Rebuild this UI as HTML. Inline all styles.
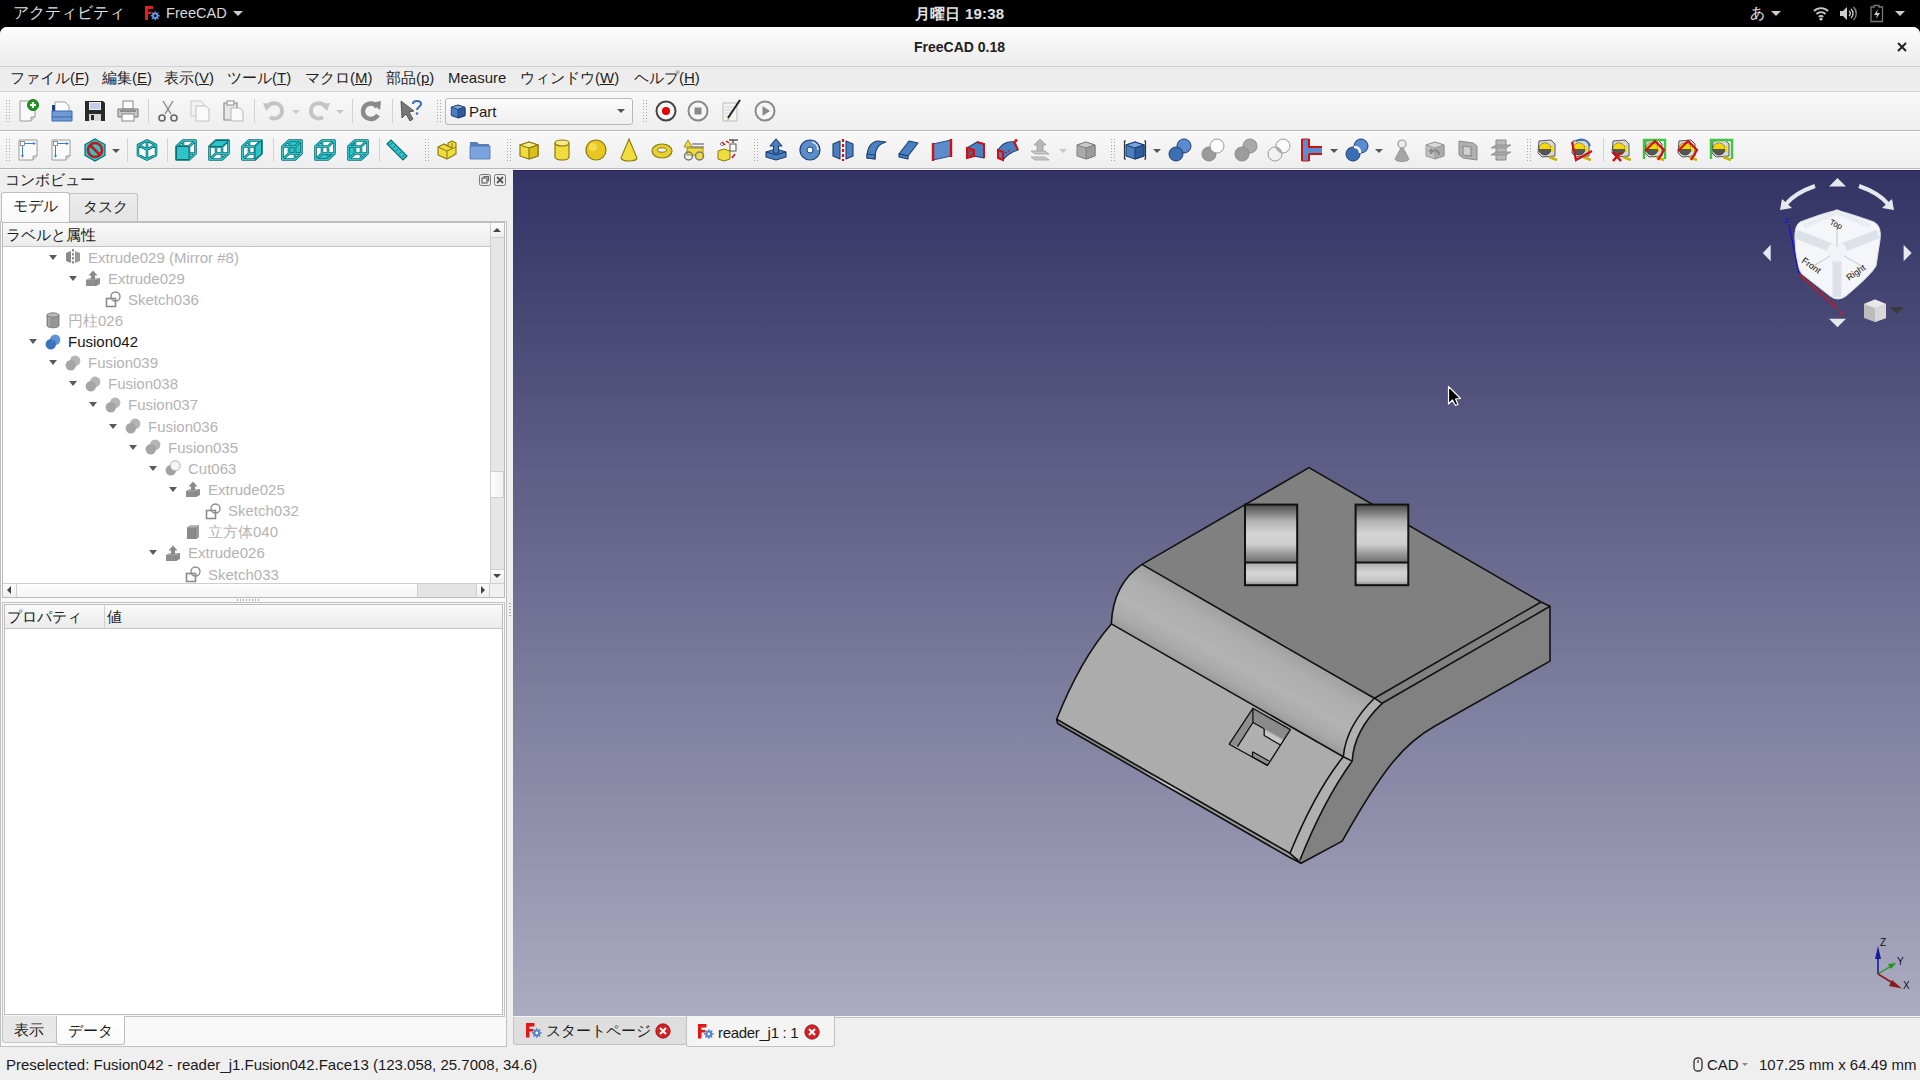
<!DOCTYPE html>
<html lang="ja">
<head>
<meta charset="utf-8">
<style>
*{margin:0;padding:0;box-sizing:border-box}
html,body{width:1920px;height:1080px;overflow:hidden;background:#000}
body{font-family:"Liberation Sans",sans-serif;position:relative;color:#1c1c1c}
.a{position:absolute}
.t{position:absolute;white-space:nowrap;line-height:1}
svg{position:absolute;overflow:visible}
#topbar{left:0;top:0;width:1920px;height:27px;background:#000;color:#e2e2e2;font-size:15px}
#win{left:0;top:27px;width:1920px;height:1053px;background:#efefef;border-radius:7px 7px 0 0;overflow:hidden}
#title{left:0;top:0;width:1920px;height:40px;background:linear-gradient(#fdfdfd,#ececec);border-bottom:1px solid #cfcfcf}
#menu{left:0;top:40px;width:1920px;height:25px;background:#ededed;border-bottom:1px solid #d4d4d4;font-size:15px;color:#1e1e1e}
.tb{left:0;width:1920px;height:39px;background:linear-gradient(#f8f8f8,#eeeeee);border-bottom:1px solid #b8b8b8}
.hd{position:absolute;width:5px;height:24px;background-image:radial-gradient(circle,#a8a8a8 0.55px,transparent 0.9px);background-size:3px 3px}
.sp{position:absolute;width:1px;height:24px;background:#d3d3d3}
.dd{position:absolute;width:0;height:0;border-left:4px solid transparent;border-right:4px solid transparent;border-top:4px solid #555}
#view{left:513px;top:143px;width:1407px;height:846px;background:linear-gradient(#333365,#ababc1);border-top:1px solid #26265a;overflow:hidden}
#status{left:0;top:1021px;width:1920px;height:32px;background:#efefef;font-size:15px}
.tree .t{font-size:15px;color:#b3b3b3}
.arr{position:absolute;width:0;height:0;border-left:4px solid transparent;border-right:4px solid transparent;border-top:5px solid #5a5a5a}
</style>
</head>
<body>

<div id="topbar" class="a">
<div class="t" style="left:13px;top:5px;font-size:15.5px">アクティビティ</div>
<svg style="left:144px;top:5px" width="16" height="16" viewBox="0 0 16 16"><path d="M1 1 H9 V4 H4 V6.5 H7.5 V9 H4 V15 H1Z" fill="#e81c1c"/><path d="M14.42,10.09 L15.76,10.17 L15.76,11.43 L14.42,11.51 L13.98,12.58 L14.87,13.58 L13.98,14.47 L12.98,13.58 L11.91,14.02 L11.83,15.36 L10.57,15.36 L10.49,14.02 L9.42,13.58 L8.42,14.47 L7.53,13.58 L8.42,12.58 L7.98,11.51 L6.64,11.43 L6.64,10.17 L7.98,10.09 L8.42,9.02 L7.53,8.02 L8.42,7.13 L9.42,8.02 L10.49,7.58 L10.57,6.24 L11.83,6.24 L11.91,7.58 L12.98,8.02 L13.98,7.13 L14.87,8.02 L13.98,9.02Z" fill="#5a9ae6"/><circle cx="11.2" cy="10.8" r="1.3" fill="#000"/></svg>
<div class="t" style="left:166px;top:6px;font-size:14.6px;color:#dadada">FreeCAD</div>
<div class="dd" style="left:233px;top:11px;border-top-color:#ccc;border-left-width:5px;border-right-width:5px;border-top-width:5px"></div>
<div class="t" style="left:915px;top:6px;font-size:15px;font-weight:bold;letter-spacing:0.2px">月曜日 19:38</div>
<div class="t" style="left:1750px;top:5px;font-size:15px">あ</div>
<div class="dd" style="left:1771px;top:11px;border-top-color:#ccc;border-left-width:5px;border-right-width:5px;border-top-width:5px"></div>
<svg style="left:1813px;top:6px" width="16" height="15" viewBox="0 0 16 15"><path d="M1 5 A10 10 0 0 1 15 5" fill="none" stroke="#ccc" stroke-width="1.8"/><path d="M3.5 8 A6.5 6.5 0 0 1 12.5 8" fill="none" stroke="#ccc" stroke-width="1.8"/><path d="M5.8 10.8 A3 3 0 0 1 10.2 10.8" fill="none" stroke="#ccc" stroke-width="1.8"/><circle cx="8" cy="13" r="1.6" fill="#ccc"/></svg>
<svg style="left:1840px;top:6px" width="17" height="15" viewBox="0 0 17 15"><path d="M0 5 H3 L7 1 V14 L3 10 H0Z" fill="#ccc"/><path d="M9 5 A3 3 0 0 1 9 10" fill="none" stroke="#ccc" stroke-width="1.4"/><path d="M11 3 A6 6 0 0 1 11 12" fill="none" stroke="#ccc" stroke-width="1.4"/><path d="M13.5 1 A9 9 0 0 1 13.5 14" fill="none" stroke="#888" stroke-width="1.4"/></svg>
<svg style="left:1870px;top:5px" width="14" height="17" viewBox="0 0 14 17"><path d="M4 0.5 H9 V2 H12.5 V16.5 H1 V2 H4Z" fill="none" stroke="#777" stroke-width="1.3"/><path d="M8 4 L4 10 H7 L6 14 L10 8 H7Z" fill="#ccc"/></svg>
<div class="dd" style="left:1895px;top:11px;border-top-color:#ccc;border-left-width:5px;border-right-width:5px;border-top-width:5px"></div>
</div>
<div id="win" class="a"></div>
<div id="title" class="a" style="top:27px;border-radius:7px 7px 0 0"></div>
<div class="t" style="left:914px;top:40px;font-weight:bold;font-size:14px;color:#202020">FreeCAD 0.18</div>
<svg style="left:1897px;top:42px" width="10" height="10" viewBox="0 0 10 10"><path d="M1 1 L9 9 M9 1 L1 9" stroke="#222" stroke-width="2"/></svg>
<div id="menu" class="a" style="top:67px">
<div class="t" style="left:10px;top:3px">ファイル(<u>F</u>)</div>
<div class="t" style="left:102px;top:3px">編集(<u>E</u>)</div>
<div class="t" style="left:164px;top:3px">表示(<u>V</u>)</div>
<div class="t" style="left:227px;top:3px">ツール(<u>T</u>)</div>
<div class="t" style="left:305px;top:3px">マクロ(<u>M</u>)</div>
<div class="t" style="left:386px;top:3px">部品(<u>p</u>)</div>
<div class="t" style="left:448px;top:3px">Measure</div>
<div class="t" style="left:520px;top:3px">ウィンドウ(<u>W</u>)</div>
<div class="t" style="left:634px;top:3px">ヘルプ(<u>H</u>)</div>
</div>
<div class="a tb" style="top:92px"></div>
<div class="a tb" style="top:131px;height:38px;border-top:1px solid #fdfdfd"></div>
<div class="a" style="left:0;top:169px;width:1920px;height:1px;background:#f8f8f8"></div>
<div class="hd" style="left:5px;top:99px"></div>
<svg style="left:16.0px;top:99.0px" width="24" height="24" viewBox="0 0 24 24"><path d="M4 2 H15 L19 6 V18 L15 22 H4Z" fill="#fafafa" stroke="#9a9a9a" stroke-width="1"/><path d="M15 22 V18 H19" fill="#ddd" stroke="#9a9a9a" stroke-width="1"/><circle cx="17" cy="6" r="5.5" fill="#1a9a1a" stroke="#0b5d0b" stroke-width="0.8"/><path d="M17 3 V9 M14 6 H20" stroke="#fff" stroke-width="2.2"/></svg>
<svg style="left:50.0px;top:99.0px" width="24" height="24" viewBox="0 0 24 24"><path d="M5 3 H15 L19 7 V14 H5Z" fill="#fff" stroke="#888" stroke-width="0.8"/><path d="M2 6 H5 V13 H22 V22 H2Z" fill="#1f3f80"/><path d="M2 12 H22 V22 H2Z" fill="#6f9ad6" stroke="#3b68a8" stroke-width="1"/><path d="M2 18 H22" stroke="#3b68a8" stroke-width="1"/></svg>
<svg style="left:83.0px;top:99.0px" width="24" height="24" viewBox="0 0 24 24"><path d="M2 2 H20 L22 4 V22 H2Z" fill="#2a2a2a"/><rect x="6" y="3" width="12" height="8" fill="#e8eef8"/><path d="M7 5 H17 M7 7 H17 M7 9 H17" stroke="#8aa0c8" stroke-width="0.8"/><rect x="6" y="15" width="12" height="7" fill="#d8d8d8"/><rect x="8" y="16" width="3" height="5" fill="#2a2a2a"/></svg>
<svg style="left:116.0px;top:99.0px" width="24" height="24" viewBox="0 0 24 24"><rect x="7" y="2" width="10" height="8" fill="#fff" stroke="#888" stroke-width="1"/><path d="M2 10 H22 V18 H2Z" fill="#c8c8c8" stroke="#777" stroke-width="1"/><rect x="6" y="15" width="12" height="7" fill="#fff" stroke="#888" stroke-width="1"/><path d="M4 12 H20" stroke="#555" stroke-width="1"/></svg>
<svg style="left:156.0px;top:99.0px" width="24" height="24" viewBox="0 0 24 24"><path d="M7 2 L15 15 M17 2 L9 15" stroke="#888" stroke-width="1.4" fill="none"/><circle cx="6" cy="19" r="3" fill="none" stroke="#666" stroke-width="1.6"/><circle cx="18" cy="19" r="3" fill="none" stroke="#666" stroke-width="1.6"/></svg>
<svg style="left:188.0px;top:99.0px" width="24" height="24" viewBox="0 0 24 24"><path d="M3 2 H13 L16 5 V17 H3Z" fill="#f2f2f2" stroke="#c8c8c8" stroke-width="1"/><path d="M8 7 H18 L21 10 V22 H8Z" fill="#fafafa" stroke="#c0c0c0" stroke-width="1"/></svg>
<svg style="left:221.0px;top:99.0px" width="24" height="24" viewBox="0 0 24 24"><path d="M3 4 H16 V21 H3Z" fill="#e8e8e8" stroke="#8a8a8a" stroke-width="1.2"/><rect x="6" y="2" width="7" height="4" fill="#fff" stroke="#8a8a8a" stroke-width="1"/><path d="M10 9 H19 L22 12 V22 H10Z" fill="#fafafa" stroke="#b8b8b8" stroke-width="1"/></svg>
<svg style="left:262.0px;top:99.0px" width="24" height="24" viewBox="0 0 24 24"><path d="M5 8 C9 2 20 3 20 12 C20 19 12 21 8 18" fill="none" stroke="#c4c4c4" stroke-width="4"/><path d="M1 4 L11 5 L4 12Z" fill="#c4c4c4"/></svg>
<svg style="left:307.0px;top:99.0px" width="24" height="24" viewBox="0 0 24 24"><path d="M19 8 C15 2 4 3 4 12 C4 19 12 21 16 18" fill="none" stroke="#c4c4c4" stroke-width="4"/><path d="M23 4 L13 5 L20 12Z" fill="#c4c4c4"/></svg>
<svg style="left:359.0px;top:99.0px" width="24" height="24" viewBox="0 0 24 24"><path d="M18 8 C15 3 5 3 4 12 C4 20 14 23 19 16" fill="none" stroke="#8a8a8a" stroke-width="4.5"/><path d="M12 4 L22 2 L21 11Z" fill="#8a8a8a"/></svg>
<svg style="left:399.0px;top:99.0px" width="24" height="24" viewBox="0 0 24 24"><path d="M2 2 L15 12 L10 13 L14 20 L11 22 L7 15 L3 19Z" fill="#777" stroke="#444" stroke-width="0.8"/><path d="M14 5 C14 1 22 1 22 5 C22 8 18 8 18 11" fill="none" stroke="#3d6fb5" stroke-width="2"/><circle cx="18" cy="14.5" r="1.3" fill="#3d6fb5"/></svg>
<svg style="left:654.0px;top:99.0px" width="24" height="24" viewBox="0 0 24 24"><circle cx="12" cy="12" r="9.5" fill="#f6f6f6" stroke="#444" stroke-width="2"/><circle cx="12" cy="12" r="4" fill="#e00000"/></svg>
<svg style="left:686.0px;top:99.0px" width="24" height="24" viewBox="0 0 24 24"><circle cx="12" cy="12" r="9.5" fill="#f6f6f6" stroke="#8a8a8a" stroke-width="2"/><rect x="8.5" y="8.5" width="7" height="7" fill="#8a8a8a"/></svg>
<svg style="left:719.0px;top:99.0px" width="24" height="24" viewBox="0 0 24 24"><path d="M4 4 H18 V22 H4Z" fill="#f4f4f4" stroke="#bbb" stroke-width="1"/><path d="M6 8 H15 M6 11 H15 M6 14 H13 M6 17 H12" stroke="#ccc" stroke-width="0.8"/><path d="M21 1 L9 19" stroke="#222" stroke-width="2"/><path d="M9 19 L8 22 L10.5 20Z" fill="#c9a050"/></svg>
<svg style="left:753.0px;top:99.0px" width="24" height="24" viewBox="0 0 24 24"><circle cx="12" cy="12" r="9.5" fill="#f6f6f6" stroke="#8a8a8a" stroke-width="2"/><path d="M9.5 7 L17 12 L9.5 17Z" fill="#8a8a8a"/></svg>
<div class="sp" style="left:148px;top:99px"></div>
<div class="sp" style="left:254px;top:99px"></div>
<div class="sp" style="left:352px;top:99px"></div>
<div class="sp" style="left:392px;top:99px"></div>
<div class="dd" style="left:292px;top:110px;border-top-color:#c8c8c8"></div>
<div class="dd" style="left:336px;top:110px;border-top-color:#c8c8c8"></div>
<div class="hd" style="left:436px;top:99px"></div>
<div class="hd" style="left:642px;top:99px"></div>
<div class="a" style="left:445px;top:98px;width:188px;height:27px;border:1px solid #b8b8b8;border-radius:3px;background:linear-gradient(#fbfbfb,#efefef)"></div>
<svg style="left:450px;top:103px" width="17" height="17" viewBox="0 0 24 24"><path d="M3 7 L12 4 L21 7 L21 18 L12 21 L3 18Z" fill="#4a7fc1" stroke="#1f3f70" stroke-width="1.1" stroke-linejoin="round"/><path d="M3 7 L12 4 L21 7 L12 10Z" fill="#7aa6e0" stroke="#1f3f70" stroke-width="1.1" stroke-linejoin="round"/><path d="M12 10 L21 7 L21 18 L12 21Z" fill="#2e5c9c" stroke="#1f3f70" stroke-width="1.1" stroke-linejoin="round"/></svg>
<svg style="left:449px;top:102px" width="18" height="18" viewBox="0 0 24 24"><path d="M3 7 L12 4 L21 7 L21 18 L12 21 L3 18Z" fill="#4a7fc1" stroke="#1f3f70" stroke-width="1.1" stroke-linejoin="round"/><path d="M3 7 L12 4 L21 7 L12 10Z" fill="#7aa6e0" stroke="#1f3f70" stroke-width="1.1" stroke-linejoin="round"/><path d="M12 10 L21 7 L21 18 L12 21Z" fill="#2e5c9c" stroke="#1f3f70" stroke-width="1.1" stroke-linejoin="round"/></svg>
<div class="t" style="left:469px;top:104px;font-size:15px;color:#1a1a1a">Part</div>
<div class="dd" style="left:617px;top:109px;border-top-color:#555;border-left-width:4px;border-right-width:4px;border-top-width:4px"></div>
<div class="hd" style="left:5px;top:138px"></div>
<svg style="left:16.0px;top:138.0px" width="24" height="24" viewBox="0 0 24 24"><path d="M3 2 H21 V18 L17 22 H3Z" fill="#fafafa" stroke="#9a9a9a" stroke-width="1"/><path d="M17 22 V18 H21" fill="#ddd" stroke="#9a9a9a" stroke-width="1"/><rect x="4.5" y="3.5" width="4" height="4" fill="#fff" stroke="#888" stroke-width="0.9"/><path d="M6.5 8 V19 M9 5.5 H19" stroke="#3a7de0" stroke-width="1"/><path d="M5 17 L6.5 20 L8 17Z M17 4 L20 5.5 L17 7Z" fill="#3a7de0"/></svg>
<svg style="left:49.0px;top:138.0px" width="24" height="24" viewBox="0 0 24 24"><path d="M3 2 H21 V18 L17 22 H3Z" fill="#fafafa" stroke="#9a9a9a" stroke-width="1"/><path d="M17 22 V18 H21" fill="#ddd" stroke="#9a9a9a" stroke-width="1"/><rect x="4.5" y="3.5" width="4" height="4" fill="#fff" stroke="#888" stroke-width="0.9"/><path d="M6.5 8 V19 M9 5.5 H19" stroke="#3a7de0" stroke-width="1"/><path d="M5 17 L6.5 20 L8 17Z M17 4 L20 5.5 L17 7Z" fill="#3a7de0"/></svg>
<svg style="left:83.0px;top:138.0px" width="24" height="24" viewBox="0 0 24 24"><path d="M12 1 L22 6.5 V17.5 L12 23 L2 17.5 V6.5Z" fill="#2ec4c8" stroke="#0b6d72" stroke-width="1.2"/><circle cx="12" cy="12" r="7" fill="none" stroke="#c81414" stroke-width="2.6"/><path d="M7 7 L17 17" stroke="#c81414" stroke-width="2.6"/></svg>
<svg style="left:135.0px;top:138.0px" width="24" height="24" viewBox="0 0 24 24"><path d="M12,2.5 L21,7 V17 L12,21.5 L3,17 V7Z" fill="#fff"/><path d="M12,2.5 L21,7 V17 L12,21.5 L3,17 V7Z M12,2.5 V21.5 M3,7 L12,11.5 L21,7" fill="none" stroke="#0b6d72" stroke-width="2.6" stroke-linejoin="round"/><path d="M12,2.5 L21,7 V17 L12,21.5 L3,17 V7Z M12,2.5 V21.5 M3,7 L12,11.5 L21,7" fill="none" stroke="#2ec4c8" stroke-width="1.1" stroke-linejoin="round"/></svg>
<svg style="left:174.0px;top:138.0px" width="24" height="24" viewBox="0 0 24 24"><path d="M2.5,8.5 L9,2.5 L21.5,2.5 L21.5,15.5 L15,21.5 L2.5,21.5Z" fill="#fff"/><path d="M2.5,8.5 H15 V21.5 H2.5Z M9,2.5 H21.5 V15.5 H9Z M2.5,8.5 L9,2.5 M15,8.5 L21.5,2.5 M15,21.5 L21.5,15.5 M2.5,21.5 L9,15.5" fill="none" stroke="#0b6d72" stroke-width="2.6" stroke-linejoin="round"/><path d="M2.5,8.5 H15 V21.5 H2.5Z M9,2.5 H21.5 V15.5 H9Z M2.5,8.5 L9,2.5 M15,8.5 L21.5,2.5 M15,21.5 L21.5,15.5 M2.5,21.5 L9,15.5" fill="none" stroke="#2ec4c8" stroke-width="1.1" stroke-linejoin="round"/><path d="M2.5,8.5 L15,8.5 L15,21.5 L2.5,21.5Z" fill="#2ec4c8" stroke="#0b6d72" stroke-width="1"/></svg>
<svg style="left:207.0px;top:138.0px" width="24" height="24" viewBox="0 0 24 24"><path d="M2.5,8.5 L9,2.5 L21.5,2.5 L21.5,15.5 L15,21.5 L2.5,21.5Z" fill="#fff"/><path d="M2.5,8.5 H15 V21.5 H2.5Z M9,2.5 H21.5 V15.5 H9Z M2.5,8.5 L9,2.5 M15,8.5 L21.5,2.5 M15,21.5 L21.5,15.5 M2.5,21.5 L9,15.5" fill="none" stroke="#0b6d72" stroke-width="2.6" stroke-linejoin="round"/><path d="M2.5,8.5 H15 V21.5 H2.5Z M9,2.5 H21.5 V15.5 H9Z M2.5,8.5 L9,2.5 M15,8.5 L21.5,2.5 M15,21.5 L21.5,15.5 M2.5,21.5 L9,15.5" fill="none" stroke="#2ec4c8" stroke-width="1.1" stroke-linejoin="round"/><path d="M2.5,8.5 L9,2.5 L21.5,2.5 L15,8.5Z" fill="#2ec4c8" stroke="#0b6d72" stroke-width="1"/></svg>
<svg style="left:240.0px;top:138.0px" width="24" height="24" viewBox="0 0 24 24"><path d="M2.5,8.5 L9,2.5 L21.5,2.5 L21.5,15.5 L15,21.5 L2.5,21.5Z" fill="#fff"/><path d="M2.5,8.5 H15 V21.5 H2.5Z M9,2.5 H21.5 V15.5 H9Z M2.5,8.5 L9,2.5 M15,8.5 L21.5,2.5 M15,21.5 L21.5,15.5 M2.5,21.5 L9,15.5" fill="none" stroke="#0b6d72" stroke-width="2.6" stroke-linejoin="round"/><path d="M2.5,8.5 H15 V21.5 H2.5Z M9,2.5 H21.5 V15.5 H9Z M2.5,8.5 L9,2.5 M15,8.5 L21.5,2.5 M15,21.5 L21.5,15.5 M2.5,21.5 L9,15.5" fill="none" stroke="#2ec4c8" stroke-width="1.1" stroke-linejoin="round"/><path d="M15,8.5 L21.5,2.5 L21.5,15.5 L15,21.5Z" fill="#2ec4c8" stroke="#0b6d72" stroke-width="1"/></svg>
<svg style="left:280.0px;top:138.0px" width="24" height="24" viewBox="0 0 24 24"><path d="M2.5,8.5 L9,2.5 L21.5,2.5 L21.5,15.5 L15,21.5 L2.5,21.5Z" fill="#fff"/><path d="M9,2.5 L21.5,2.5 L21.5,15.5 L9,15.5Z" fill="#2ec4c8"/><path d="M2.5,8.5 H15 V21.5 H2.5Z M9,2.5 H21.5 V15.5 H9Z M2.5,8.5 L9,2.5 M15,8.5 L21.5,2.5 M15,21.5 L21.5,15.5 M2.5,21.5 L9,15.5" fill="none" stroke="#0b6d72" stroke-width="2.6" stroke-linejoin="round"/><path d="M2.5,8.5 H15 V21.5 H2.5Z M9,2.5 H21.5 V15.5 H9Z M2.5,8.5 L9,2.5 M15,8.5 L21.5,2.5 M15,21.5 L21.5,15.5 M2.5,21.5 L9,15.5" fill="none" stroke="#2ec4c8" stroke-width="1.1" stroke-linejoin="round"/></svg>
<svg style="left:313.0px;top:138.0px" width="24" height="24" viewBox="0 0 24 24"><path d="M2.5,8.5 L9,2.5 L21.5,2.5 L21.5,15.5 L15,21.5 L2.5,21.5Z" fill="#fff"/><path d="M2.5,21.5 L15,21.5 L21.5,15.5 L9,15.5Z" fill="#2ec4c8"/><path d="M2.5,8.5 H15 V21.5 H2.5Z M9,2.5 H21.5 V15.5 H9Z M2.5,8.5 L9,2.5 M15,8.5 L21.5,2.5 M15,21.5 L21.5,15.5 M2.5,21.5 L9,15.5" fill="none" stroke="#0b6d72" stroke-width="2.6" stroke-linejoin="round"/><path d="M2.5,8.5 H15 V21.5 H2.5Z M9,2.5 H21.5 V15.5 H9Z M2.5,8.5 L9,2.5 M15,8.5 L21.5,2.5 M15,21.5 L21.5,15.5 M2.5,21.5 L9,15.5" fill="none" stroke="#2ec4c8" stroke-width="1.1" stroke-linejoin="round"/></svg>
<svg style="left:346.0px;top:138.0px" width="24" height="24" viewBox="0 0 24 24"><path d="M2.5,8.5 L9,2.5 L21.5,2.5 L21.5,15.5 L15,21.5 L2.5,21.5Z" fill="#fff"/><path d="M2.5,8.5 L9,2.5 L9,15.5 L2.5,21.5Z" fill="#2ec4c8"/><path d="M2.5,8.5 H15 V21.5 H2.5Z M9,2.5 H21.5 V15.5 H9Z M2.5,8.5 L9,2.5 M15,8.5 L21.5,2.5 M15,21.5 L21.5,15.5 M2.5,21.5 L9,15.5" fill="none" stroke="#0b6d72" stroke-width="2.6" stroke-linejoin="round"/><path d="M2.5,8.5 H15 V21.5 H2.5Z M9,2.5 H21.5 V15.5 H9Z M2.5,8.5 L9,2.5 M15,8.5 L21.5,2.5 M15,21.5 L21.5,15.5 M2.5,21.5 L9,15.5" fill="none" stroke="#2ec4c8" stroke-width="1.1" stroke-linejoin="round"/></svg>
<svg style="left:385.0px;top:138.0px" width="24" height="24" viewBox="0 0 24 24"><path d="M2 6 L6 2 L22 18 L18 22Z" fill="#2ec4c8" stroke="#0b6d72" stroke-width="1.2"/><path d="M5 7 L7 5 M8 10 L10 8 M11 13 L13 11 M14 16 L16 14 M17 19 L19 17" stroke="#0b6d72" stroke-width="0.9"/></svg>
<svg style="left:435.0px;top:138.0px" width="24" height="24" viewBox="0 0 24 24"><path d="M3 9 L9 6 L13 8 V5 L17 3 L21 5 V16 L12 21 L3 17Z" fill="#f0dc3c" stroke="#8a7a10" stroke-width="1.1" stroke-linejoin="round"/><path d="M3 9 L12 13 L21 9 M12 13 V21 M9 6 L17 10 M13 8 L17 10 V5" fill="none" stroke="#8a7a10" stroke-width="1"/></svg>
<svg style="left:468.0px;top:138.0px" width="24" height="24" viewBox="0 0 24 24"><path d="M2 4 H9 L11 6 H21 V20 H2Z" fill="#5a7fb8"/><path d="M2 8 H22 V21 H2Z" fill="#7aa2dc" stroke="#4c72ad" stroke-width="0.8"/></svg>
<svg style="left:517.0px;top:138.0px" width="24" height="24" viewBox="0 0 24 24"><path d="M3 7 L12 4 L21 7 L21 18 L12 21 L3 18Z" fill="#f0dc3c" stroke="#8a7a10" stroke-width="1.2" stroke-linejoin="round"/><path d="M3 7 L12 4 L21 7 L12 10Z" fill="#f8ec80" stroke="#8a7a10" stroke-width="1.2" stroke-linejoin="round"/><path d="M12 10 L21 7 L21 18 L12 21Z" fill="#d8c020" stroke="#8a7a10" stroke-width="1.2" stroke-linejoin="round"/></svg>
<svg style="left:550.0px;top:138.0px" width="24" height="24" viewBox="0 0 24 24"><path d="M5 5 V19 A7 3 0 0 0 19 19 V5" fill="#f0dc3c" stroke="#8a7a10" stroke-width="1.2"/><ellipse cx="12" cy="5" rx="7" ry="3" fill="#f8ec80" stroke="#8a7a10" stroke-width="1.2"/></svg>
<svg style="left:584.0px;top:138.0px" width="24" height="24" viewBox="0 0 24 24"><circle cx="12" cy="12" r="10" fill="#e8c820" stroke="#8a7a10" stroke-width="1.2"/><circle cx="9" cy="9" r="4" fill="#f6e26a" opacity="0.7"/></svg>
<svg style="left:617.0px;top:138.0px" width="24" height="24" viewBox="0 0 24 24"><path d="M12 1 L20 20 A8 3 0 0 1 4 20Z" fill="#f0dc3c" stroke="#8a7a10" stroke-width="1.1"/></svg>
<svg style="left:650.0px;top:138.0px" width="24" height="24" viewBox="0 0 24 24"><ellipse cx="12" cy="13" rx="10" ry="7" fill="#e8d030" stroke="#8a7a10" stroke-width="1.2"/><ellipse cx="12" cy="12" rx="4.5" ry="2.2" fill="#f4f4f4" stroke="#8a7a10" stroke-width="1"/></svg>
<svg style="left:682.0px;top:138.0px" width="24" height="24" viewBox="0 0 24 24"><path d="M6 2 L10 9 H2Z" fill="#f0dc3c" stroke="#8a7a10" stroke-width="0.8"/><path d="M10 6 H22 M10 9 H22" stroke="#888" stroke-width="1.5"/><rect x="5" y="10" width="16" height="7" fill="#f0dc3c" stroke="#8a7a10" stroke-width="0.8"/><circle cx="6.5" cy="18" r="4" fill="none" stroke="#777" stroke-width="1.5"/><circle cx="17.5" cy="18" r="4" fill="#f0dc3c" stroke="#777" stroke-width="1.5"/></svg>
<svg style="left:716.0px;top:138.0px" width="24" height="24" viewBox="0 0 24 24"><path d="M2 13 L8 11 L14 13 V21 L8 23 L2 21Z" fill="#f0dc3c" stroke="#8a7a10" stroke-width="1"/><rect x="14" y="6" width="6" height="7" fill="#fff" stroke="#555" stroke-width="1"/><path d="M13 2 H22 M17 2 V5" stroke="#555" stroke-width="1.5"/><path d="M6 4 L9 7 M10 3 L13 5 M19 16 L16 20" stroke="#d01010" stroke-width="1.5"/><path d="M4 6 L6 4 L8 6 L6 8Z" fill="none" stroke="#555" stroke-width="0.8"/></svg>
<svg style="left:764.0px;top:138.0px" width="24" height="24" viewBox="0 0 24 24"><path d="M2 14 L12 11 L22 14 V19 L12 22 L2 19Z" fill="#4a7fc1" stroke="#1f3f70" stroke-width="1.1" stroke-linejoin="round"/><path d="M2 14 L12 17 L22 14" fill="#4a7fc1" stroke="#1f3f70" stroke-width="1.1" stroke-linejoin="round"/><path d="M12 1 L18 8 H14.5 V15 H9.5 V8 H6Z" fill="#4a7fc1" stroke="#1f3f70" stroke-width="1.1" stroke-linejoin="round"/></svg>
<svg style="left:798.0px;top:138.0px" width="24" height="24" viewBox="0 0 24 24"><circle cx="12" cy="12" r="10" fill="#5b8ccc" stroke="#1f3f70" stroke-width="1.2"/><circle cx="12" cy="12" r="3" fill="#fff" stroke="#1f3f70" stroke-width="1"/><path d="M14 4 A8 8 0 0 1 20 12" fill="none" stroke="#dfe8f5" stroke-width="1.6"/></svg>
<svg style="left:831.0px;top:138.0px" width="24" height="24" viewBox="0 0 24 24"><path d="M2 6 L9 3 V21 L2 18Z" fill="#4a7fc1" stroke="#1f3f70" stroke-width="1.1" stroke-linejoin="round"/><path d="M15 3 L22 6 V18 L15 21Z" fill="#4a7fc1" stroke="#1f3f70" stroke-width="1.1" stroke-linejoin="round"/><path d="M12 1 V23" stroke="#d01010" stroke-width="2.2" stroke-dasharray="3 2"/></svg>
<svg style="left:864.0px;top:138.0px" width="24" height="24" viewBox="0 0 24 24"><path d="M3 20 C3 10 6 4 14 3 L22 4 C15 6 11 10 11 21Z" fill="#4a7fc1" stroke="#1f3f70" stroke-width="1.1" stroke-linejoin="round"/><path d="M3 16 L11 17 V21 L3 20Z" fill="#4a7fc1" stroke="#1f3f70" stroke-width="1.1" stroke-linejoin="round"/></svg>
<svg style="left:896.0px;top:138.0px" width="24" height="24" viewBox="0 0 24 24"><path d="M3 16 L13 3 L22 5 L12 18Z" fill="#4a7fc1" stroke="#1f3f70" stroke-width="1.1" stroke-linejoin="round"/><path d="M3 16 L12 18 V21 L3 19Z" fill="#4a7fc1" stroke="#1f3f70" stroke-width="1.1" stroke-linejoin="round"/></svg>
<svg style="left:930.0px;top:138.0px" width="24" height="24" viewBox="0 0 24 24"><path d="M3 6 L21 2 V18 L3 22Z" fill="#5b8ccc" stroke="#2a4f85" stroke-width="1"/><path d="M3 5 V23 M21 1 V19" stroke="#d01010" stroke-width="2.4"/></svg>
<svg style="left:963.0px;top:138.0px" width="24" height="24" viewBox="0 0 24 24"><path d="M4 10 L14 4 L21 6 V20 L11 18 L4 20Z" fill="#4a7fc1" stroke="#1f3f70" stroke-width="1.1" stroke-linejoin="round"/><path d="M4 10 L11 12 V18 L4 20Z" fill="#4a7fc1" stroke="#1f3f70" stroke-width="1.1" stroke-linejoin="round"/><path d="M4 10 L11 12 V18 L4 20Z M14 4 L21 6 V20" fill="none" stroke="#d01010" stroke-width="2"/><rect x="6" y="13" width="3" height="4" fill="none" stroke="#d01010" stroke-width="1.2"/></svg>
<svg style="left:996.0px;top:138.0px" width="24" height="24" viewBox="0 0 24 24"><path d="M2 12 C6 6 12 3 18 4 L22 12 C16 14 10 18 7 22 L2 20Z" fill="#4a7fc1" stroke="#1f3f70" stroke-width="1.1" stroke-linejoin="round"/><path d="M2 12 L7 14 V22 L2 20Z" fill="#4a7fc1" stroke="#d01010" stroke-width="2"/><path d="M18 3 L22 12" stroke="#d01010" stroke-width="2"/><circle cx="20" cy="2.5" r="1.6" fill="#d01010"/><path d="M9 15 L14 12" stroke="#d01010" stroke-width="1.2" stroke-dasharray="2 1.5"/></svg>
<svg style="left:1028.0px;top:138.0px" width="24" height="24" viewBox="0 0 24 24"><path d="M12 1 L18 7 H15 V14 H9 V7 H6Z" fill="#b8b8b8" stroke="#9a9a9a" stroke-width="0.8"/><path d="M3 13 H17 L21 16 H7Z" fill="#c8c8c8" stroke="#a0a0a0" stroke-width="0.8"/><path d="M3 19 H17 L21 22 H7Z" fill="#c8c8c8" stroke="#a0a0a0" stroke-width="0.8"/></svg>
<svg style="left:1074.0px;top:138.0px" width="24" height="24" viewBox="0 0 24 24"><path d="M3 7 L12 4 L21 7 L21 18 L12 21 L3 18Z" fill="#aaa" stroke="#808080" stroke-width="1" stroke-linejoin="round"/><path d="M3 7 L12 4 L21 7 L12 10Z" fill="#c8c8c8" stroke="#808080" stroke-width="1" stroke-linejoin="round"/><path d="M12 10 L21 7 L21 18 L12 21Z" fill="#9a9a9a" stroke="#808080" stroke-width="1" stroke-linejoin="round"/></svg>
<svg style="left:1123.0px;top:138.0px" width="24" height="24" viewBox="0 0 24 24"><path d="M3 3 H1.5 V21 H3 M21 3 H22.5 V21 H21" fill="none" stroke="#333" stroke-width="1.2"/><path d="M3 7 L12 4 L21 7 L21 18 L12 21 L3 18Z" fill="#4a7fc1" stroke="#1f3f70" stroke-width="1.1" stroke-linejoin="round"/><path d="M3 7 L12 4 L21 7 L12 10Z" fill="#7aa6e0" stroke="#1f3f70" stroke-width="1.1" stroke-linejoin="round"/><path d="M12 10 L21 7 L21 18 L12 21Z" fill="#2e5c9c" stroke="#1f3f70" stroke-width="1.1" stroke-linejoin="round"/></svg>
<svg style="left:1168.0px;top:138.0px" width="24" height="24" viewBox="0 0 24 24"><circle cx="16" cy="8" r="7" fill="#5a8ad0" stroke="#1f3f70" stroke-width="1" opacity="1"/><circle cx="8" cy="16" r="7" fill="#3c6eb4" stroke="#1f3f70" stroke-width="1" opacity="1"/></svg>
<svg style="left:1201.0px;top:138.0px" width="24" height="24" viewBox="0 0 24 24"><circle cx="8" cy="16" r="7" fill="#9a9a9a" stroke="#888" stroke-width="1"/><circle cx="16" cy="8" r="7" fill="#fdfdfd" stroke="#999" stroke-width="1"/></svg>
<svg style="left:1234.0px;top:138.0px" width="24" height="24" viewBox="0 0 24 24"><circle cx="16" cy="8" r="7" fill="#a8a8a8" stroke="#8a8a8a" stroke-width="1" opacity="1"/><circle cx="8" cy="16" r="7" fill="#9c9c9c" stroke="#8a8a8a" stroke-width="1" opacity="1"/></svg>
<svg style="left:1267.0px;top:138.0px" width="24" height="24" viewBox="0 0 24 24"><circle cx="16" cy="8" r="7" fill="#fafafa" stroke="#9a9a9a" stroke-width="1"/><circle cx="8" cy="16" r="7" fill="none" stroke="#9a9a9a" stroke-width="1"/><path d="M9.5 9.1 A7 7 0 0 1 14.9 14.5 A7 7 0 0 1 9.5 9.1Z" fill="#a8a8a8"/></svg>
<svg style="left:1300.0px;top:138.0px" width="24" height="24" viewBox="0 0 24 24"><path d="M2 1 H9 V9 H22 V16 H9 V23 H2Z" fill="#5b8ccc"/><path d="M2 1 V23 M9 1 V9 H22 M9 16 H22 M9 16 V23" fill="none" stroke="#d01010" stroke-width="2"/><path d="M2 1 H9 M2 23 H9" stroke="#d01010" stroke-width="1"/></svg>
<svg style="left:1345.0px;top:138.0px" width="24" height="24" viewBox="0 0 24 24"><circle cx="16" cy="8" r="7" fill="#5a8ad0" stroke="#1f3f70" stroke-width="1"/><circle cx="8" cy="16" r="7" fill="#3c6eb4" stroke="#1f3f70" stroke-width="1"/><path d="M9 9 C13 9 15 11 15 15" fill="none" stroke="#f6f6f6" stroke-width="2.5"/></svg>
<svg style="left:1390.0px;top:138.0px" width="24" height="24" viewBox="0 0 24 24"><path d="M12 8 L19 21 A7 2.5 0 0 1 5 21Z" fill="#a6a6a6" stroke="#8a8a8a" stroke-width="0.8"/><circle cx="12" cy="6" r="4" fill="#ececec" stroke="#999" stroke-width="1.2"/></svg>
<svg style="left:1423.0px;top:138.0px" width="24" height="24" viewBox="0 0 24 24"><path d="M3 7 L12 4 L21 7 L21 18 L12 21 L3 18Z" fill="#c0c0c0" stroke="#9a9a9a" stroke-width="1" stroke-linejoin="round"/><path d="M3 7 L12 4 L21 7 L12 10Z" fill="#d8d8d8" stroke="#9a9a9a" stroke-width="1" stroke-linejoin="round"/><path d="M12 10 L21 7 L21 18 L12 21Z" fill="#aaaaaa" stroke="#9a9a9a" stroke-width="1" stroke-linejoin="round"/><path d="M8 16 C8 11 16 11 16 17" fill="none" stroke="#888" stroke-width="2.2"/><path d="M5 13 L9 10 L10 15Z" fill="#888"/></svg>
<svg style="left:1456.0px;top:138.0px" width="24" height="24" viewBox="0 0 24 24"><path d="M3 3 L17 5 L21 8 V22 L7 20 L3 17Z" fill="#b0b0b0" stroke="#8a8a8a" stroke-width="1"/><path d="M7 8 L15 9 V18 L7 17Z" fill="#d0d0d0" stroke="#8a8a8a" stroke-width="1.2"/></svg>
<svg style="left:1489.0px;top:138.0px" width="24" height="24" viewBox="0 0 24 24"><path d="M7 2 H17 V22 H7Z" fill="#b8b8b8" stroke="#8a8a8a" stroke-width="1"/><path d="M2 10 L7 7 H22 L17 10Z M2 17 L7 14 H22 L17 17Z" fill="#a8a8a8" stroke="#8a8a8a" stroke-width="0.8"/></svg>
<svg style="left:1536.0px;top:138.0px" width="24" height="24" viewBox="0 0 24 24"><path d="M3 3 L15 2 L19 6 V18 L6 19 L2 15Z" fill="#d8d8d8" stroke="#555" stroke-width="1"/><circle cx="9" cy="11" r="6" fill="#555" stroke="#333" stroke-width="0.8"/><path d="M3 11 A6 6 0 0 1 15 11Z" fill="#f0d800"/><path d="M16 8 V14" stroke="#f0d800" stroke-width="2"/><path d="M13 19 L21 22" stroke="#c8b000" stroke-width="2.5"/></svg>
<svg style="left:1570.0px;top:138.0px" width="24" height="24" viewBox="0 0 24 24"><path d="M3 3 L15 2 L19 6 V18 L6 19 L2 15Z" fill="#d8d8d8" stroke="#555" stroke-width="1"/><circle cx="9" cy="11" r="6" fill="#555" stroke="#333" stroke-width="0.8"/><path d="M3 11 A6 6 0 0 1 15 11Z" fill="#f0d800"/><path d="M16 8 V14" stroke="#f0d800" stroke-width="2"/><path d="M13 19 L21 22" stroke="#c8b000" stroke-width="2.5"/><path d="M2 4 L6 22 L22 13" fill="none" stroke="#d01010" stroke-width="2.2"/><path d="M6 3 C12 0 18 2 20 8" fill="none" stroke="#3a6fb0" stroke-width="2"/></svg>
<svg style="left:1610.0px;top:138.0px" width="24" height="24" viewBox="0 0 24 24"><path d="M3 3 L15 2 L19 6 V18 L6 19 L2 15Z" fill="#d8d8d8" stroke="#555" stroke-width="1"/><circle cx="9" cy="11" r="6" fill="#555" stroke="#333" stroke-width="0.8"/><path d="M3 11 A6 6 0 0 1 15 11Z" fill="#f0d800"/><path d="M16 8 V14" stroke="#f0d800" stroke-width="2"/><path d="M13 19 L21 22" stroke="#c8b000" stroke-width="2.5"/><path d="M3 14 L11 23 M11 14 L3 23" stroke="#d01010" stroke-width="2.6"/></svg>
<svg style="left:1643.0px;top:138.0px" width="24" height="24" viewBox="0 0 24 24"><path d="M3 3 L15 2 L19 6 V18 L6 19 L2 15Z" fill="#d8d8d8" stroke="#555" stroke-width="1"/><circle cx="9" cy="11" r="6" fill="#555" stroke="#333" stroke-width="0.8"/><path d="M3 11 A6 6 0 0 1 15 11Z" fill="#f0d800"/><path d="M16 8 V14" stroke="#f0d800" stroke-width="2"/><path d="M13 19 L21 22" stroke="#c8b000" stroke-width="2.5"/><path d="M1 21 V2 H22 V21" fill="none" stroke="#3cc83c" stroke-width="2.4"/><path d="M2 13 L12 3 L21 12 L15 22" fill="none" stroke="#d01010" stroke-width="2.2"/></svg>
<svg style="left:1676.0px;top:138.0px" width="24" height="24" viewBox="0 0 24 24"><path d="M3 3 L15 2 L19 6 V18 L6 19 L2 15Z" fill="#d8d8d8" stroke="#555" stroke-width="1"/><circle cx="9" cy="11" r="6" fill="#555" stroke="#333" stroke-width="0.8"/><path d="M3 11 A6 6 0 0 1 15 11Z" fill="#f0d800"/><path d="M16 8 V14" stroke="#f0d800" stroke-width="2"/><path d="M13 19 L21 22" stroke="#c8b000" stroke-width="2.5"/><path d="M2 13 L12 3 L21 12 L15 22" fill="none" stroke="#d01010" stroke-width="2.2"/></svg>
<svg style="left:1710.0px;top:138.0px" width="24" height="24" viewBox="0 0 24 24"><path d="M3 3 L15 2 L19 6 V18 L6 19 L2 15Z" fill="#d8d8d8" stroke="#555" stroke-width="1"/><circle cx="9" cy="11" r="6" fill="#555" stroke="#333" stroke-width="0.8"/><path d="M3 11 A6 6 0 0 1 15 11Z" fill="#f0d800"/><path d="M16 8 V14" stroke="#f0d800" stroke-width="2"/><path d="M13 19 L21 22" stroke="#c8b000" stroke-width="2.5"/><path d="M1 21 V2 H22 V21" fill="none" stroke="#3cc83c" stroke-width="2.4"/></svg>
<div class="sp" style="left:127px;top:138px"></div>
<div class="sp" style="left:167px;top:138px"></div>
<div class="sp" style="left:273px;top:138px"></div>
<div class="sp" style="left:379px;top:138px"></div>
<div class="sp" style="left:1603px;top:138px"></div>
<div class="hd" style="left:424px;top:138px"></div>
<div class="hd" style="left:506px;top:138px"></div>
<div class="hd" style="left:753px;top:138px"></div>
<div class="hd" style="left:1110px;top:138px"></div>
<div class="hd" style="left:1526px;top:138px"></div>
<div class="dd" style="left:112px;top:149px;border-top-color:#555"></div>
<div class="dd" style="left:1059px;top:149px;border-top-color:#c8c8c8"></div>
<div class="dd" style="left:1153px;top:149px;border-top-color:#555"></div>
<div class="dd" style="left:1330px;top:149px;border-top-color:#555"></div>
<div class="dd" style="left:1375px;top:149px;border-top-color:#555"></div>
<div class="t" style="left:5px;top:172px;font-size:15px;color:#222">コンボビュー</div>
<svg style="left:479px;top:174px" width="12" height="12" viewBox="0 0 12 12"><rect x="0.5" y="0.5" width="11" height="11" rx="2" fill="none" stroke="#777"/><rect x="3" y="4" width="5" height="5" fill="none" stroke="#666" stroke-width="1.2"/><path d="M5 4 V2.5 H9.5 V7 H8" fill="none" stroke="#666" stroke-width="1.2"/></svg>
<svg style="left:494px;top:174px" width="12" height="12" viewBox="0 0 12 12"><rect x="0.5" y="0.5" width="11" height="11" rx="2" fill="none" stroke="#777"/><path d="M3 3 L9 9 M9 3 L3 9" stroke="#555" stroke-width="1.8"/></svg>
<div class="a" style="left:0px;top:221px;width:507px;height:826px;border:1px solid #c0c0c0;background:#f8f8f8"></div>
<div class="a" style="left:1px;top:192px;width:69px;height:30px;border:1px solid #bdbdbd;border-bottom:none;border-radius:3px 3px 0 0;background:linear-gradient(#ffffff,#f8f8f8);z-index:2"></div>
<div class="a" style="left:69px;top:193px;width:69px;height:28px;border:1px solid #c4c4c4;border-bottom:none;border-radius:3px 3px 0 0;background:linear-gradient(#ececec,#e4e4e4)"></div>
<div class="t" style="left:13px;top:198px;font-size:15px;color:#1a1a1a;z-index:3">モデル</div>
<div class="t" style="left:83px;top:199px;font-size:15px;color:#1a1a1a">タスク</div>
<div class="a" style="left:2px;top:222px;width:503px;height:376px;border:1px solid #bcbcbc;background:#fff"></div>
<div class="a" style="left:3px;top:223px;width:487px;height:24px;background:linear-gradient(#fafafa,#ebebeb);border-bottom:1px solid #c6c6c6"></div>
<div class="t" style="left:6px;top:227px;font-size:15px;color:#1a1a1a">ラベルと属性</div>
<div class="a" style="left:490px;top:223px;width:14px;height:360px;background:#e6e6e6;border-left:1px solid #cfcfcf"></div>
<div class="a" style="left:490px;top:223px;width:14px;height:15px;background:linear-gradient(#fdfdfd,#eeeeee);border-left:1px solid #cfcfcf;border-bottom:1px solid #cfcfcf"></div>
<div class="a" style="left:493px;top:228px;width:0;height:0;border-left:4px solid transparent;border-right:4px solid transparent;border-bottom:4px solid #444"></div>
<div class="a" style="left:490px;top:471px;width:14px;height:27px;background:linear-gradient(90deg,#fdfdfd,#f2f2f2);border:1px solid #cfcfcf"></div>
<div class="a" style="left:490px;top:569px;width:14px;height:14px;background:linear-gradient(#fdfdfd,#eeeeee);border-left:1px solid #cfcfcf;border-top:1px solid #cfcfcf"></div>
<div class="a" style="left:493px;top:574px;width:0;height:0;border-left:4px solid transparent;border-right:4px solid transparent;border-top:4px solid #444"></div>
<div class="a" style="left:3px;top:583px;width:501px;height:14px;background:#f0f0f0;border-top:1px solid #cfcfcf"></div>
<div class="a" style="left:3px;top:584px;width:14px;height:13px;background:linear-gradient(#fdfdfd,#eeeeee);border-right:1px solid #cfcfcf"></div>
<div class="a" style="left:17px;top:584px;width:400px;height:13px;background:linear-gradient(#fefefe,#f4f4f4)"></div>
<div class="a" style="left:417px;top:584px;width:60px;height:13px;background:#e4e4e4;border-left:1px solid #cfcfcf"></div>
<div class="a" style="left:476px;top:584px;width:14px;height:13px;background:linear-gradient(#fdfdfd,#eeeeee);border-left:1px solid #cfcfcf;border-right:1px solid #cfcfcf"></div>
<div class="a" style="left:7px;top:586px;width:0;height:0;border-top:4px solid transparent;border-bottom:4px solid transparent;border-right:4px solid #444"></div>
<div class="a" style="left:481px;top:586px;width:0;height:0;border-top:4px solid transparent;border-bottom:4px solid transparent;border-left:4px solid #444"></div>
<div class="a" style="left:236px;top:599px;width:24px;height:2px;background-image:radial-gradient(circle,#aaa 0.6px,transparent 0.9px);background-size:3px 2px"></div>
<div class="a" style="left:509px;top:602px;width:2px;height:16px;background-image:radial-gradient(circle,#aaa 0.6px,transparent 0.9px);background-size:2px 3px"></div>
<div class="a tree" style="left:3px;top:247px;width:487px;height:336px;overflow:hidden">
<div class="arr" style="left:46px;top:7.5px"></div>
<svg style="left:62px;top:2.0px" width="16" height="16" viewBox="0 0 16 16"><path d="M1 4 L6 2 V14 L1 12Z" fill="#8a8a8a"/><path d="M10 2 L15 4 V12 L10 14Z" fill="#9a9a9a"/><path d="M8 0 V16" stroke="#777" stroke-width="1.6" stroke-dasharray="2.5 1.5"/></svg>
<div class="t" style="left:85px;top:2.5px;color:#b3b3b3">Extrude029 (Mirror #8)</div>
<div class="arr" style="left:66px;top:28.6px"></div>
<svg style="left:82px;top:23.1px" width="16" height="16" viewBox="0 0 16 16"><path d="M1 10 L5 8 H15 V14 L11 16 H1Z" fill="#8e8e8e"/><path d="M1 10 L5 8 H15 L11 10Z" fill="#b0b0b0"/><path d="M11 10 V16" stroke="#7a7a7a" stroke-width="0.8"/><path d="M8 0.5 L12.5 5.5 H10 V9.5 H6 V5.5 H3.5Z" fill="#8a8a8a"/></svg>
<div class="t" style="left:105px;top:23.6px;color:#b3b3b3">Extrude029</div>
<svg style="left:102px;top:44.3px" width="16" height="16" viewBox="0 0 16 16"><rect x="1.5" y="7.5" width="9" height="8" fill="none" stroke="#8c8c8c" stroke-width="1.6"/><circle cx="10.5" cy="5.5" r="4.5" fill="none" stroke="#8c8c8c" stroke-width="1.4"/></svg>
<div class="t" style="left:125px;top:44.8px;color:#b3b3b3">Sketch036</div>
<svg style="left:42px;top:65.4px" width="16" height="16" viewBox="0 0 16 16"><path d="M2 3 V13.5 A6 2.3 0 0 0 14 13.5 V3" fill="#959595" stroke="#707070" stroke-width="0.8"/><ellipse cx="8" cy="3" rx="6" ry="2.2" fill="#b8b8b8" stroke="#707070" stroke-width="0.8"/><path d="M4 5 V14" stroke="#b0b0b0" stroke-width="1.5"/></svg>
<div class="t" style="left:65px;top:65.9px;color:#b3b3b3">円柱026</div>
<div class="arr" style="left:26px;top:92.0px"></div>
<svg style="left:42px;top:86.5px" width="16" height="16" viewBox="0 0 16 16"><circle cx="10.2" cy="5.8" r="5.2" fill="#5f93d3"/><circle cx="5.8" cy="10.2" r="5.2" fill="#3d72be"/><path d="M6.5 8.5 L8.5 6.5" stroke="#6a9ad6" stroke-width="1"/></svg>
<div class="t" style="left:65px;top:87.0px;color:#161616">Fusion042</div>
<div class="arr" style="left:46px;top:113.1px"></div>
<svg style="left:62px;top:107.6px" width="16" height="16" viewBox="0 0 16 16"><circle cx="10.2" cy="5.8" r="5.2" fill="#b5b5b5"/><circle cx="5.8" cy="10.2" r="5.2" fill="#a5a5a5"/></svg>
<div class="t" style="left:85px;top:108.1px;color:#b3b3b3">Fusion039</div>
<div class="arr" style="left:66px;top:134.3px"></div>
<svg style="left:82px;top:128.8px" width="16" height="16" viewBox="0 0 16 16"><circle cx="10.2" cy="5.8" r="5.2" fill="#b5b5b5"/><circle cx="5.8" cy="10.2" r="5.2" fill="#a5a5a5"/></svg>
<div class="t" style="left:105px;top:129.3px;color:#b3b3b3">Fusion038</div>
<div class="arr" style="left:86px;top:155.4px"></div>
<svg style="left:102px;top:149.9px" width="16" height="16" viewBox="0 0 16 16"><circle cx="10.2" cy="5.8" r="5.2" fill="#b5b5b5"/><circle cx="5.8" cy="10.2" r="5.2" fill="#a5a5a5"/></svg>
<div class="t" style="left:125px;top:150.4px;color:#b3b3b3">Fusion037</div>
<div class="arr" style="left:106px;top:176.5px"></div>
<svg style="left:122px;top:171.0px" width="16" height="16" viewBox="0 0 16 16"><circle cx="10.2" cy="5.8" r="5.2" fill="#b5b5b5"/><circle cx="5.8" cy="10.2" r="5.2" fill="#a5a5a5"/></svg>
<div class="t" style="left:145px;top:171.5px;color:#b3b3b3">Fusion036</div>
<div class="arr" style="left:126px;top:197.7px"></div>
<svg style="left:142px;top:192.2px" width="16" height="16" viewBox="0 0 16 16"><circle cx="10.2" cy="5.8" r="5.2" fill="#b5b5b5"/><circle cx="5.8" cy="10.2" r="5.2" fill="#a5a5a5"/></svg>
<div class="t" style="left:165px;top:192.7px;color:#b3b3b3">Fusion035</div>
<div class="arr" style="left:146px;top:218.8px"></div>
<svg style="left:162px;top:213.3px" width="16" height="16" viewBox="0 0 16 16"><circle cx="5.8" cy="10.2" r="5.2" fill="#a2a2a2"/><circle cx="10.2" cy="5.8" r="5" fill="#f6f6f6" stroke="#a8a8a8" stroke-width="0.9"/></svg>
<div class="t" style="left:185px;top:213.8px;color:#b3b3b3">Cut063</div>
<div class="arr" style="left:166px;top:239.9px"></div>
<svg style="left:182px;top:234.4px" width="16" height="16" viewBox="0 0 16 16"><path d="M1 10 L5 8 H15 V14 L11 16 H1Z" fill="#8e8e8e"/><path d="M1 10 L5 8 H15 L11 10Z" fill="#b0b0b0"/><path d="M11 10 V16" stroke="#7a7a7a" stroke-width="0.8"/><path d="M8 0.5 L12.5 5.5 H10 V9.5 H6 V5.5 H3.5Z" fill="#8a8a8a"/></svg>
<div class="t" style="left:205px;top:234.9px;color:#b3b3b3">Extrude025</div>
<svg style="left:202px;top:255.6px" width="16" height="16" viewBox="0 0 16 16"><rect x="1.5" y="7.5" width="9" height="8" fill="none" stroke="#8c8c8c" stroke-width="1.6"/><circle cx="10.5" cy="5.5" r="4.5" fill="none" stroke="#8c8c8c" stroke-width="1.4"/></svg>
<div class="t" style="left:225px;top:256.1px;color:#b3b3b3">Sketch032</div>
<svg style="left:182px;top:276.7px" width="16" height="16" viewBox="0 0 16 16"><path d="M2 3.5 L5 1.5 H14 V13 L11 15 H2Z" fill="#8a8a8a"/><path d="M2 3.5 L5 1.5 H14 L11 3.5Z" fill="#b4b4b4"/><path d="M11 3.5 V15" stroke="#6e6e6e" stroke-width="0.8"/><path d="M11 3.5 L14 1.5 V13 L11 15Z" fill="#9a9a9a"/></svg>
<div class="t" style="left:205px;top:277.2px;color:#b3b3b3">立方体040</div>
<div class="arr" style="left:146px;top:303.3px"></div>
<svg style="left:162px;top:297.8px" width="16" height="16" viewBox="0 0 16 16"><path d="M1 10 L5 8 H15 V14 L11 16 H1Z" fill="#8e8e8e"/><path d="M1 10 L5 8 H15 L11 10Z" fill="#b0b0b0"/><path d="M11 10 V16" stroke="#7a7a7a" stroke-width="0.8"/><path d="M8 0.5 L12.5 5.5 H10 V9.5 H6 V5.5 H3.5Z" fill="#8a8a8a"/></svg>
<div class="t" style="left:185px;top:298.3px;color:#b3b3b3">Extrude026</div>
<svg style="left:182px;top:319.0px" width="16" height="16" viewBox="0 0 16 16"><rect x="1.5" y="7.5" width="9" height="8" fill="none" stroke="#8c8c8c" stroke-width="1.6"/><circle cx="10.5" cy="5.5" r="4.5" fill="none" stroke="#8c8c8c" stroke-width="1.4"/></svg>
<div class="t" style="left:205px;top:319.5px;color:#b3b3b3">Sketch033</div>
</div>
<div class="a" style="left:2px;top:602px;width:503px;height:415px;border:1px solid #c2c2c2;background:#f8f8f8"></div>
<div class="a" style="left:4px;top:604px;width:499px;height:411px;border:1px solid #bcbcbc;background:#fff"></div>
<div class="a" style="left:5px;top:605px;width:497px;height:24px;background:linear-gradient(#fafafa,#ebebeb);border-bottom:1px solid #c6c6c6"></div>
<div class="a" style="left:104px;top:605px;width:1px;height:24px;background:#d0d0d0"></div>
<div class="t" style="left:7px;top:609px;font-size:15px;color:#1a1a1a">プロパティ</div>
<div class="t" style="left:107px;top:609px;font-size:15px;color:#1a1a1a">値</div>
<div class="a" style="left:2px;top:1016px;width:55px;height:27px;border:1px solid #c4c4c4;border-top:none;border-radius:0 0 3px 3px;background:linear-gradient(#e6e6e6,#e8e8e8)"></div>
<div class="a" style="left:56px;top:1016px;width:69px;height:29px;border:1px solid #bdbdbd;border-top:none;border-radius:0 0 3px 3px;background:linear-gradient(#ffffff,#fafafa)"></div>
<div class="t" style="left:14px;top:1022px;font-size:15px;color:#1a1a1a">表示</div>
<div class="t" style="left:68px;top:1023px;font-size:15px;color:#1a1a1a">データ</div>
<div id="view" class="a" style="top:170px"></div>
<svg style="left:513px;top:170px" width="1407" height="846" viewBox="513 170 1407 846"><defs><linearGradient id="gtab" x1="0" y1="0" x2="0" y2="1"><stop offset="0" stop-color="#4a4a4a"/><stop offset="0.28" stop-color="#b0b0b0"/><stop offset="0.5" stop-color="#d4d4d4"/><stop offset="0.68" stop-color="#cfcfcf"/><stop offset="0.9" stop-color="#8a8a8a"/><stop offset="1" stop-color="#707070"/></linearGradient><linearGradient id="gtab2" x1="0" y1="0" x2="0" y2="1"><stop offset="0" stop-color="#a8a8a8"/><stop offset="0.45" stop-color="#d6d6d6"/><stop offset="0.8" stop-color="#c4c4c4"/><stop offset="1" stop-color="#8c8c8c"/></linearGradient><linearGradient id="gfil" gradientUnits="userSpaceOnUse" x1="1142" y1="564.4" x2="1108.7" y2="622.4"><stop offset="0" stop-color="#a0a0a0"/><stop offset="0.25" stop-color="#aeaeae"/><stop offset="0.6" stop-color="#b3b3b3"/><stop offset="0.85" stop-color="#a9a9a9"/><stop offset="1" stop-color="#9a9a9a"/></linearGradient><linearGradient id="gfil2" gradientUnits="userSpaceOnUse" x1="1200" y1="620" x2="1178" y2="660"><stop offset="0" stop-color="#b2b2b2"/><stop offset="0.5" stop-color="#acacac"/><stop offset="1" stop-color="#8f8f8f"/></linearGradient><linearGradient id="gbot" gradientUnits="userSpaceOnUse" x1="1170" y1="782" x2="1167" y2="789"><stop offset="0" stop-color="#8a8a8a"/><stop offset="0.5" stop-color="#d0d0d0"/><stop offset="1" stop-color="#9a9a9a"/></linearGradient></defs><path d="M1309,467.6 L1541,602 L1374.4,698.2 L1142,564.4 Z" fill="#808080"/><path d="M1541,602 L1550,606.3 L1550,661.1 L1435,726 C1405,743 1385,765 1342.2,841.1 L1301.1,863.3 L1290,853.3 Q1315,792 1343.3,756.7 Q1346,726 1374.4,698.2 Z" fill="#818181"/><path d="M1142,564.4 L1374.4,698.2 Q1346,726 1343.3,756.7 L1111.3,623.9 Q1113,584 1142,564.4 Z" fill="url(#gfil)"/><path d="M1111.3,623.9 L1343.3,756.7 Q1315,792 1290,853.3 L1056.7,719.3 Q1080,660 1111.3,623.9 Z" fill="#acacac"/><path d="M1374.4,698.2 L1382.2,703.3 Q1354,730 1352.2,761.1 Q1324,800 1300,860 L1290,853.3 Q1315,792 1343.3,756.7 Q1346,726 1374.4,698.2Z" fill="#b0b0b0"/><path d="M1056.7,719.3 L1290,853.3 L1301.1,863.3 L1289.8,857.5 L1057.6,723.5 Z" fill="url(#gbot)"/><g fill="none" stroke="#111" stroke-width="1.6" stroke-linejoin="round"><path d="M1142,564.4 L1309,467.6 L1541,602 L1550,606.3 L1550,661.1 L1435,726 C1405,743 1385,765 1342.2,841.1 L1301.1,863.3 L1289.8,857.5 L1057.6,723.5 L1056.7,719.3 Q1080,660 1111.3,623.9 Q1113,584 1142,564.4 Z"/><path d="M1142,564.4 L1374.4,698.2 L1541,602"/><path d="M1374.4,698.2 L1382.2,703.3 L1550,606.3"/><path d="M1111.3,623.9 L1343.3,756.7"/><path d="M1056.7,719.3 L1290,853.3 L1301.1,863.3"/><path d="M1374.4,698.2 Q1346,726 1343.3,756.7 Q1315,792 1290,853.3"/><path d="M1382.2,703.3 Q1354,730 1352.2,761.1 Q1324,800 1300,860"/><path d="M1343.3,756.7 L1352.2,761.1"/></g><rect x="1245" y="504.6" width="52.200000000000045" height="57.8" fill="url(#gtab)"/><rect x="1245" y="562.4" width="52.200000000000045" height="22.8" fill="url(#gtab2)"/><rect x="1245" y="504.6" width="52.200000000000045" height="80.6" fill="none" stroke="#111" stroke-width="2"/><path d="M1245 562.4 H1297.2" stroke="#111" stroke-width="2"/><rect x="1355.6" y="504.6" width="52.700000000000045" height="57.8" fill="url(#gtab)"/><rect x="1355.6" y="562.4" width="52.700000000000045" height="22.8" fill="url(#gtab2)"/><rect x="1355.6" y="504.6" width="52.700000000000045" height="80.6" fill="none" stroke="#111" stroke-width="2"/><path d="M1355.6 562.4 H1408.3" stroke="#111" stroke-width="2"/><path d="M1252.9,708.3 L1290.4,729.6 L1267.5,765.4 L1229.2,744.2 Z" fill="#b0b0b0"/><path d="M1229.2,744.2 L1252.9,708.3 L1252.9,722.5 L1237.5,746.7 Z" fill="#8e8e8e"/><path d="M1252.9,708.3 L1290.4,729.6 L1283.3,739.2 L1252.9,722.5 Z" fill="#8a8a8a"/><path d="M1264.2,730 L1283.3,740.5 L1280.5,745 L1264.2,735.5 Z" fill="#c6c6c6"/><path d="M1252.5,751.7 L1269,761 L1267.5,765.4 L1252.5,757 Z" fill="#909090"/><g fill="none" stroke="#111" stroke-width="1.3" stroke-linejoin="round"><path d="M1252.9,708.3 L1290.4,729.6 L1267.5,765.4 L1229.2,744.2 Z"/><path d="M1252.9,708.3 V722.5 L1264.2,728.8 M1252.9,722.5 L1237.5,746.7"/><path d="M1264.2,729 V735.5 L1280.5,745 M1252.5,751.7 V757 L1267.5,765.4 M1252.5,751.7 L1269,761"/></g></svg>
<svg style="left:1740px;top:170px" width="180" height="170" viewBox="1740 170 180 170"><g fill="#e6e8ee"><path d="M1829,186.5 L1837.5,178 L1846,186.5Z"/><path d="M1829,318.7 L1846,318.7 L1837.5,327.3Z"/><path d="M1770.7,244.7 L1770.7,261.3 L1762.8,253Z"/><path d="M1903.6,244.7 L1911.6,253 L1903.6,261.3Z"/></g><path d="M1815,186 Q1795,193 1786,204" fill="none" stroke="#e6e8ee" stroke-width="4"/><path d="M1782,199 L1780,210 L1792,208Z" fill="#e6e8ee"/><path d="M1859,186 Q1879,193 1888,204" fill="none" stroke="#e6e8ee" stroke-width="4"/><path d="M1892,199 L1894,210 L1882,208Z" fill="#e6e8ee"/><path d="M1836.8,211 Q1840,210 1874,222 Q1882,226 1880,240 L1876,266 Q1872,274 1846,296 Q1838,302 1830,296 L1802,274 Q1796,268 1795,240 Q1794,226 1800,222 Q1832,210 1836.8,211Z" fill="#f4f6f9" stroke="#d8dbe2" stroke-width="1"/><path d="M1804,226 L1837,212 L1870,226" fill="none" stroke="#e9ecf1" stroke-width="5"/><path d="M1796,234 L1837,250 L1878,234 M1837,250 V297" fill="none" stroke="#dde1e8" stroke-width="9"/><circle cx="1837" cy="252" r="10" fill="#f2f4f7"/><path d="M1837,221 V247" stroke="#c8c8d0" stroke-width="1"/><path d="M1830,256 L1810,268 M1844,256 L1865,268" stroke="#c8c8d0" stroke-width="1"/><path d="M1799,274 L1789,225" stroke="#1010e0" stroke-width="1.2"/><path d="M1799,274 L1837,308" stroke="#e01010" stroke-width="1.2"/><text x="1784" y="223" font-size="8" fill="#1010e0" font-family="Liberation Sans">Z</text><text x="1838" y="316" font-size="8" fill="#e01010" font-family="Liberation Sans">X</text><text x="0" y="0" font-size="9" fill="#111" font-family="Liberation Sans" transform="translate(1801,262) rotate(35)">Front</text><text x="0" y="0" font-size="9" fill="#111" font-family="Liberation Sans" transform="translate(1849,281) rotate(-35)">Right</text><text x="0" y="0" font-size="8" fill="#111" font-family="Liberation Sans" transform="translate(1829,224) rotate(25)">Top</text><path d="M1864,304 L1875,299.5 L1886,304 V318 L1875,322 L1864,318Z" fill="#bcbcbc"/><path d="M1864,304 L1875,299.5 L1886,304 L1875,308Z" fill="#e8e8e8"/><path d="M1875,308 L1886,304 V318 L1875,322Z" fill="#d8d8d8"/><path d="M1890,307 H1904 L1897,314Z" fill="#3a3a3a"/></svg>
<svg style="left:1860px;top:935px" width="60" height="60" viewBox="1860 935 60 60"><path d="M1878,974 V952" stroke="#1a1a9a" stroke-width="1.6"/><path d="M1875,959 L1878,946 L1881,959Z" fill="#1a1a9a"/><path d="M1878,974 L1891,966" stroke="#1a9a1a" stroke-width="1.4"/><path d="M1888,964 L1896,963 L1891,969Z" fill="#1a9a1a"/><path d="M1878,974 L1896,985" stroke="#8a1a1a" stroke-width="1.6"/><path d="M1892,980 L1902,988.5 L1889,986Z" fill="#8a1a1a"/><text x="1880" y="946" font-size="10" fill="#111" font-family="Liberation Sans">Z</text><text x="1897" y="965" font-size="10" fill="#111" font-family="Liberation Sans">Y</text><text x="1903" y="989" font-size="10" fill="#111" font-family="Liberation Sans">X</text></svg>
<svg style="left:1446px;top:385px" width="20" height="24" viewBox="1446 385 20 24"><path d="M1448.5,386.5 V404 L1452.5,400 L1455.5,405.5 L1458,404.5 L1455.5,399 L1460.5,398.5 Z" fill="#000" stroke="#fff" stroke-width="1.2" stroke-linejoin="round"/></svg>
<div class="a" style="left:513px;top:1016px;width:1407px;height:1px;background:#f4f4f4"></div>
<div class="a" style="left:513px;top:1017px;width:1407px;height:1px;background:#c2c2c2"></div>
<div class="a" style="left:513px;top:1017px;width:174px;height:28px;border:1px solid #c2c2c2;border-top:none;border-radius:0 0 3px 3px;background:#dedede"></div>
<div class="a" style="left:686px;top:1016px;width:149px;height:31px;border:1px solid #c2c2c2;border-top:none;border-radius:0 0 3px 3px;background:#f4f4f4"></div>
<svg style="left:525px;top:1022px" width="17" height="17" viewBox="0 0 17 17"><path d="M1 1 H9.5 V4.5 H4.5 V7 H8 V9.5 H4.5 V15.5 H1Z" fill="#e01818"/><path d="M15.22,10.25 L16.65,10.33 L16.65,11.67 L15.22,11.75 L14.75,12.89 L15.71,13.96 L14.76,14.91 L13.69,13.95 L12.55,14.42 L12.47,15.85 L11.13,15.85 L11.05,14.42 L9.91,13.95 L8.84,14.91 L7.89,13.96 L8.85,12.89 L8.38,11.75 L6.95,11.67 L6.95,10.33 L8.38,10.25 L8.85,9.11 L7.89,8.04 L8.84,7.09 L9.91,8.05 L11.05,7.58 L11.13,6.15 L12.47,6.15 L12.55,7.58 L13.69,8.05 L14.76,7.09 L15.71,8.04 L14.75,9.11Z" fill="#4f80c8"/><circle cx="11.8" cy="11" r="1.4" fill="#fff"/></svg>
<div class="t" style="left:546px;top:1023px;font-size:15px;color:#1a1a1a">スタートページ</div>
<svg style="left:655px;top:1023px" width="16" height="16" viewBox="0 0 16 16"><circle cx="8" cy="8" r="7.2" fill="#d42020" stroke="#8a1010" stroke-width="0.8"/><path d="M5 5 L11 11 M11 5 L5 11" stroke="#fff" stroke-width="2"/></svg>
<svg style="left:697px;top:1023px" width="17" height="17" viewBox="0 0 17 17"><path d="M1 1 H9.5 V4.5 H4.5 V7 H8 V9.5 H4.5 V15.5 H1Z" fill="#e01818"/><path d="M15.22,10.25 L16.65,10.33 L16.65,11.67 L15.22,11.75 L14.75,12.89 L15.71,13.96 L14.76,14.91 L13.69,13.95 L12.55,14.42 L12.47,15.85 L11.13,15.85 L11.05,14.42 L9.91,13.95 L8.84,14.91 L7.89,13.96 L8.85,12.89 L8.38,11.75 L6.95,11.67 L6.95,10.33 L8.38,10.25 L8.85,9.11 L7.89,8.04 L8.84,7.09 L9.91,8.05 L11.05,7.58 L11.13,6.15 L12.47,6.15 L12.55,7.58 L13.69,8.05 L14.76,7.09 L15.71,8.04 L14.75,9.11Z" fill="#4f80c8"/><circle cx="11.8" cy="11" r="1.4" fill="#fff"/></svg>
<div class="t" style="left:718px;top:1025px;font-size:15px;color:#1a1a1a;letter-spacing:-0.3px">reader_j1 : 1</div>
<svg style="left:804px;top:1024px" width="16" height="16" viewBox="0 0 16 16"><circle cx="8" cy="8" r="7.2" fill="#d42020" stroke="#8a1010" stroke-width="0.8"/><path d="M5 5 L11 11 M11 5 L5 11" stroke="#fff" stroke-width="2"/></svg>
<div class="t" style="left:6px;top:1057px;font-size:15px;color:#1a1a1a">Preselected: Fusion042 - reader_j1.Fusion042.Face13 (123.058, 25.7008, 34.6)</div>
<svg style="left:1693px;top:1057px" width="10" height="15" viewBox="0 0 10 15"><rect x="1" y="1" width="8" height="13" rx="3.5" fill="none" stroke="#333" stroke-width="1.3"/><path d="M5 3 V6" stroke="#333" stroke-width="1.2"/></svg>
<div class="t" style="left:1707px;top:1057px;font-size:15px;color:#1a1a1a">CAD</div>
<div class="dd" style="left:1742px;top:1063px;border-top-color:#888;border-left-width:3px;border-right-width:3px;border-top-width:3px"></div>
<div class="t" style="left:1759px;top:1057px;font-size:15px;color:#1a1a1a">107.25 mm x 64.49 mm</div>
</body></html>
